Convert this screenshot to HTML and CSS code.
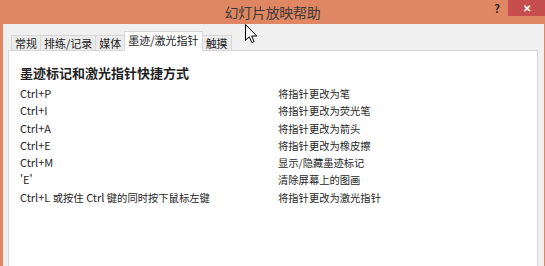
FILE: index.html
```html
<!DOCTYPE html>
<html lang="zh-CN">
<head>
    <meta charset="UTF-8">
    <title>幻灯片放映帮助</title>
    <link rel="stylesheet" href="styles.css">
</head>
<body>
    <div class="window">
        <div class="titlebar">
            <span></span>
            <span class="title">幻灯片放映帮助</span>
            <div class="controls">
                <span class="help">?</span>
                <span class="close">✕</span>
            </div>
        </div>
        <div class="client">
            <div class="tabs">
                <div class="tab">常规</div>
                <div class="tab">排练/记录</div>
                <div class="tab">媒体</div>
                <div class="tab active">墨迹/激光指针</div>
                <div class="tab">触摸</div>
            </div>
            <div class="panel">
                <h2>墨迹标记和激光指针快捷方式</h2>
                <div class="keys">
                    <span>Ctrl+P</span><span class="zh">将指针更改为笔</span>
                    <span>Ctrl+I</span><span class="zh">将指针更改为荧光笔</span>
                    <span>Ctrl+A</span><span class="zh">将指针更改为箭头</span>
                    <span>Ctrl+E</span><span class="zh">将指针更改为橡皮擦</span>
                    <span>Ctrl+M</span><span class="zh">显示/隐藏墨迹标记</span>
                    <span>'E'</span><span class="zh">清除屏幕上的图画</span>
                    <span>Ctrl+L <span class="zh">或按住</span> Ctrl <span class="zh">键的同时按下鼠标左键</span></span><span class="zh">将指针更改为激光指针</span>
                </div>
            </div>
        </div>
        <svg class="cursor" width="13" height="21" viewBox="0 0 13 21">
            <path d="M0.5 0.5 L0.5 16.5 L4.3 12.8 L6.8 18.6 L9 17.6 L6.6 12 L11.8 12 Z" fill="#fff" stroke="#000" stroke-width="1"/>
        </svg>
    </div>
</body>
</html>
```

FILE: styles.css
```css
html, body {
    margin: 0;
    padding: 0;
}
body {
    font-family: "Noto Sans CJK SC", "Noto Sans", sans-serif;
    color: #2b2b2b;
}
.window {
    position: relative;
    width: 545px;
    height: 266px;
    background: #df8762;
    display: flex;
    flex-direction: column;
    overflow: hidden;
}
.titlebar {
    height: 24px;
    display: grid;
    grid-template-columns: 1fr auto 1fr;
    align-items: start;
}
.title {
    font-size: 14px;
    line-height: 24px;
    color: #3f3a38;
    letter-spacing: -0.3px;
}
.controls {
    justify-self: end;
    display: flex;
    align-items: center;
}
.help {
    width: 22px;
    font-size: 11px;
    font-weight: bold;
    line-height: 16px;
    color: #2a2a2a;
    text-align: center;
}
.close {
    width: 37px;
    height: 16px;
    background: #c74e4e;
    color: #fff;
    font-size: 10px;
    font-weight: bold;
    line-height: 16px;
    text-align: center;
}
.client {
    flex: 1;
    margin: 0 1px 0 3px;
    padding: 0 6px 0 5px;
    background: #f0f0f0;
    display: flex;
    flex-direction: column;
}
.tabs {
    height: 26px;
    display: flex;
    align-items: flex-end;
    padding-left: 3px;
}
.tab {
    box-sizing: border-box;
    height: 15px;
    padding: 0 3px;
    margin-right: -1px;
    border: 1px solid #d6d6d6;
    border-bottom: none;
    background: #ececec;
    font-size: 11px;
    line-height: 14px;
    color: #222;
}
.tab.active {
    position: relative;
    z-index: 1;
    height: 20px;
    margin-bottom: -1px;
    padding: 0 3px;
    background: #fff;
    line-height: 17px;
}
.panel {
    flex: 1;
    background: #fff;
    border: 1px solid #d6d6d6;
    border-bottom: none;
    padding: 12px 0 0 11px;
}
h2 {
    margin: 0 0 2px;
    font-size: 13px;
    font-weight: bold;
    line-height: 20px;
    color: #1f1f1f;
}
.keys {
    display: grid;
    grid-template-columns: 258px 1fr;
    font-size: 11px;
    line-height: 17.3px;
    color: #262626;
}
.zh {
    font-size: 10.3px;
}
.cursor {
    position: absolute;
    left: 245px;
    top: 24px;
}
```
